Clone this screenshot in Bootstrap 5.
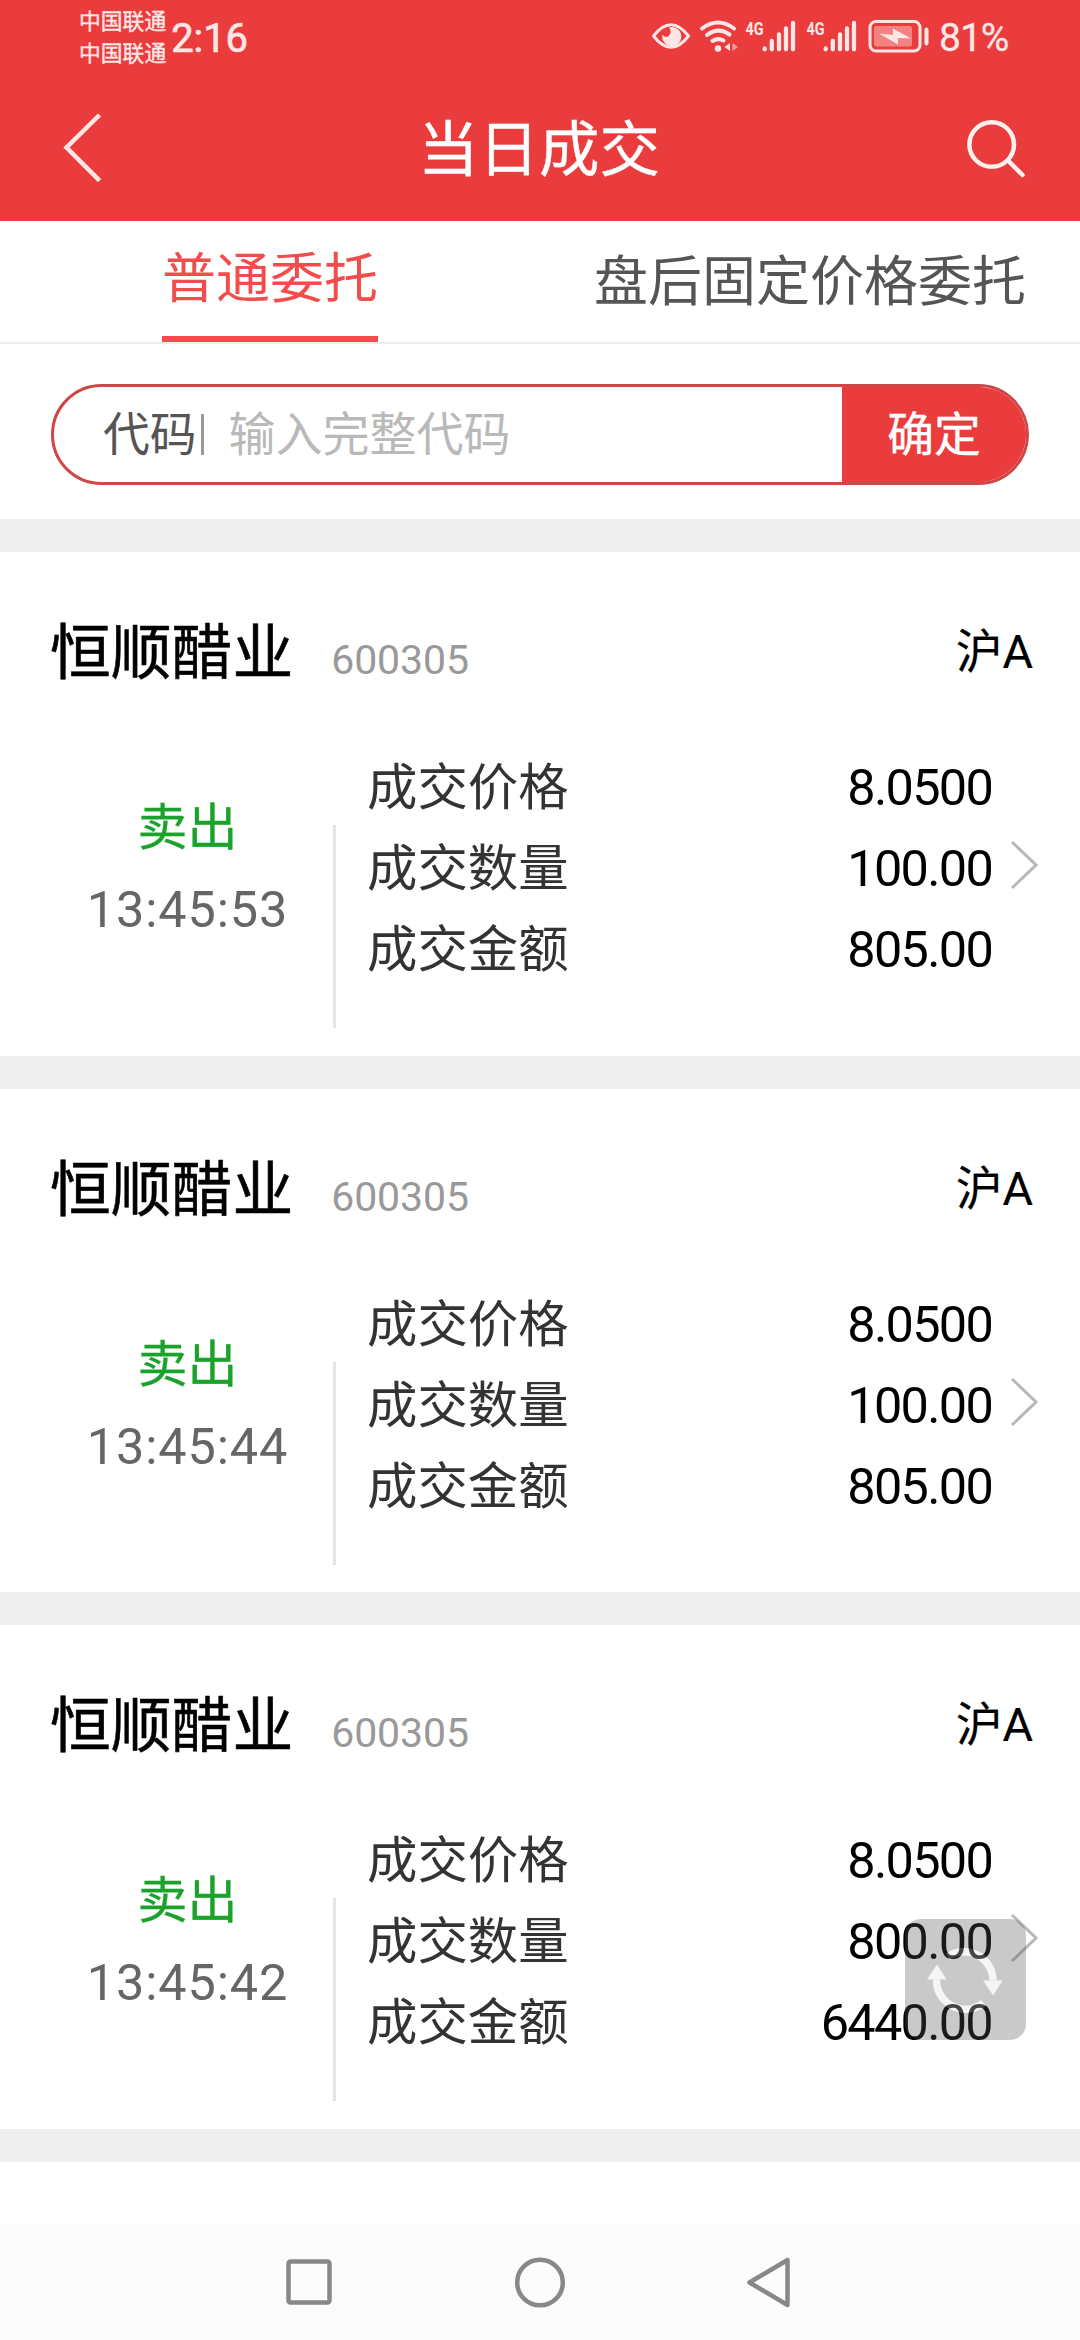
<!DOCTYPE html>
<html lang="zh-CN">
<head>
<meta charset="utf-8">
<meta name="viewport" content="width=device-width, initial-scale=1">
<title>当日成交</title>
<link href="https://cdn.jsdelivr.net/npm/bootstrap@5.3.0/dist/css/bootstrap.min.css" rel="stylesheet">
<style>
  body { font-family: Roboto, "Noto Sans CJK SC", sans-serif; background: #fff; color: #000; width: 1080px; height: 2340px; overflow: hidden; }
  svg { display: block; flex: none; }
  .brand-red { background: #ea3c3c; }
  .status-bar { height: 78px; padding-left: 79px; color: #ffe6e6; }
  .carrier { font-size: 21.8px; line-height: 32px; padding-top: 6px; -webkit-text-stroke: .4px; }
  .clock { font-size: 40px; line-height: 78px; margin-left: 5px; letter-spacing: -.1px; -webkit-text-stroke: .7px; }
  .status-icons { margin-left: auto; }
  .percent { font-size: 39px; line-height: 77px; margin-left: 10px; width: 141px; letter-spacing: -1px; -webkit-text-stroke: .3px; }
  .title-bar { height: 143px; padding: 0 54px 0 62px; color: #fff; }
  .page-title { font-size: 60.5px; line-height: 143px; font-weight: 400; padding: 2px 0 0 10px; -webkit-text-stroke: .4px; }
  .tab-strip { height: 123px; border-bottom: 2px solid #eee; }
  .tab-item, .tab-item:hover { font-size: 54px; color: #555; line-height: 119px; height: 121px; padding: 2px 0 0; border: 0; border-radius: 0; }
  .tab-item.active { color: #f24c4c; border-bottom: 6px solid #f24c4c; padding: 2px 0 0; line-height: 114px; }
  .search-area { height: 175px; padding: 40px 51px 0; }
  .search-pill { height: 101px; border: 3px solid #d04545; border-radius: 51px; overflow: hidden; font-size: 46.8px; }
  .pill-label { color: #555; padding: 2px 0 0 49px; }
  .pill-bar { width: 3px; height: 41px; background: #999; margin-left: 4px; }
  .pill-input, .pill-input:focus { font-size: 47px; padding: 2px 0 0 25px; border: 0; box-shadow: none; background: none; }
  .pill-input::placeholder { color: #b9b9b9; opacity: 1; }
  .pill-btn, .pill-btn:hover { background: #ea3c3c; color: #fff; width: 184px; height: 95px; font-size: 46.8px; line-height: 95px; padding: 1px 0 0; border: 0; border-radius: 0; -webkit-text-stroke: .4px; }
  .gap-band { height: 33px; background: #efefef; }
  .trade { height: 503.5px; }
  .trade-head { height: 192px; padding: 62px 47px 0 50px; }
  .stock-name { font-size: 60.8px; line-height: 80px; -webkit-text-stroke: .6px; }
  .stock-code { font-size: 41px; line-height: 50px; color: #999; margin-left: 38px; letter-spacing: -.1px; }
  .market { font-size: 46.8px; line-height: 77px; -webkit-text-stroke: .2px; }
  .line-col { line-height: 81.2px; font-size: 50.4px; }
  .side-col { width: 333px; padding: 44px 0 0 42px; }
  .side-label { color: #1aa32a; font-size: 50px; -webkit-text-stroke: .3px; }
  .time { color: #666; letter-spacing: .9px; }
  .rule { width: 3px; height: 203px; background: #e5e5e5; margin-top: 81px; }
  .keys { color: #333; padding-left: 31px; padding-top: 3px; }
  .vals { letter-spacing: -1.7px; padding-top: 3px; }
  .chev { margin: 96px 42px 0 18px; }
  .refresh { position: absolute; left: 905px; top: 1919px; width: 121px; height: 121px; border-radius: 16px; background: #545454; opacity: .31; }
  .tail { height: 63px; }
  .nav-keys { height: 116px; background: #fcfcfc; padding: 0 285px; }
</style>
</head>
<body>
<header class="brand-red">
  <div class="status-bar d-flex">
    <div class="carrier"><div>中国联通</div><div>中国联通</div></div>
    <div class="clock">2:16</div>
    <div class="status-icons d-flex">
      <svg width="280" height="78" viewBox="650 0 280 78" fill="none" stroke="#ffe6e6" stroke-width="3">
        <path d="M654.500 36Q672 13.500 689.500 36Q672 58.500 654.500 36Z" stroke-linejoin="round"/>
        <path d="M670 27.500A9.500 9.500 0 1 1 663.500 34.500C664.500 37 667.500 37.500 669.500 36C672 34 672.500 30.500 670 27.500Z" fill="#ffe6e6" stroke="none"/>
        <g stroke-width="4" stroke-linecap="round">
          <path d="M703 28.500Q719 16.500 735 28.500M708 35Q719 26.500 730.500 34.500M713.500 41Q719 37.500 724.500 40.500"/>
        </g>
        <circle cx="719" cy="48.500" r="3.200" fill="#ffe6e6" stroke="none"/>
        <path d="M731 43v8l-5.500-4Z" fill="#ffe6e6" stroke="none"/>
        <path d="M733.500 43v8l5.500-4Z" fill="#f59a9a" stroke="none"/>
        <g fill="#ffe6e6" stroke="none" font-family="Roboto, sans-serif" font-weight="700" font-size="19">
          <text x="746.500" y="34.700" textLength="18" lengthAdjust="spacingAndGlyphs">4G</text>
          <text x="807.500" y="34.700" textLength="18" lengthAdjust="spacingAndGlyphs">4G</text>
        </g>
        <g stroke-width="4.300" stroke-linecap="round">
          <path d="M765.700 48.500v.8M772.800 41v8.300M780 34.500v14.800M787 28.500v20.800M794 23v26.300"/>
          <path d="M826.700 48.500v.8M833.800 41v8.300M841 34.500v14.800M848 28.500v20.800M855 23v26.300"/>
        </g>
        <rect x="871" y="21.500" width="50" height="29.500" rx="6"/>
        <rect x="875" y="26" width="38" height="20.500" rx="2.500" fill="#f38383" stroke="none"/>
        <path d="M880 33.500L894 35V28.500L912 38.500L899 38V44.500Z" fill="#ffe6e6" stroke="none"/>
        <path d="M927.500 29.500v14" stroke-width="4" stroke-linecap="round"/>
      </svg>
      <div class="percent">81%</div>
    </div>
  </div>
  <div class="title-bar d-flex align-items-center justify-content-between">
    <svg width="44" height="72" viewBox="62 114 44 72" fill="none" stroke="#ffe6e6" stroke-width="4.500" stroke-linecap="square"><path d="M98 116.500L66.500 147.500L98 179"/></svg>
    <h1 class="page-title m-0">当日成交</h1>
    <svg width="64" height="72" viewBox="962 113.500 64 72" fill="none" stroke="#fff0f0" stroke-width="4.500" stroke-linecap="round"><circle cx="991.700" cy="144" r="22.300"/><path d="M1008 160L1022.500 174.500"/></svg>
  </div>
</header>

<nav class="tab-strip d-flex">
  <div class="w-50 d-flex justify-content-center"><a class="tab-item nav-link active">普通委托</a></div>
  <div class="w-50 d-flex justify-content-center"><a class="tab-item nav-link">盘后固定价格委托</a></div>
</nav>

<section class="search-area">
  <div class="search-pill d-flex align-items-center">
    <span class="pill-label text-nowrap">代码</span>
    <span class="pill-bar flex-shrink-0"></span>
    <input class="form-control pill-input" type="text" placeholder="输入完整代码">
    <button class="btn pill-btn flex-shrink-0" type="button">确定</button>
  </div>
</section>

<main>
  <div class="gap-band"></div>
  <article class="trade">
    <div class="trade-head d-flex justify-content-between">
      <div class="d-flex align-items-baseline"><span class="stock-name">恒顺醋业</span><span class="stock-code">600305</span></div>
      <span class="market">沪A</span>
    </div>
    <div class="d-flex">
      <div class="side-col line-col text-center"><div class="side-label">卖出</div><div class="time">13:45:53</div></div>
      <div class="rule"></div>
      <div class="keys line-col"><div>成交价格</div><div>成交数量</div><div>成交金额</div></div>
      <div class="vals line-col text-end ms-auto"><div>8.0500</div><div>100.00</div><div>805.00</div></div>
      <svg class="chev" width="28" height="50" viewBox="0 0 28 50" fill="none" stroke="#b8b8b8" stroke-width="3"><path d="M2 2L26 25L2 48"/></svg>
    </div>
  </article>
  <div class="gap-band"></div>
  <article class="trade">
    <div class="trade-head d-flex justify-content-between">
      <div class="d-flex align-items-baseline"><span class="stock-name">恒顺醋业</span><span class="stock-code">600305</span></div>
      <span class="market">沪A</span>
    </div>
    <div class="d-flex">
      <div class="side-col line-col text-center"><div class="side-label">卖出</div><div class="time">13:45:44</div></div>
      <div class="rule"></div>
      <div class="keys line-col"><div>成交价格</div><div>成交数量</div><div>成交金额</div></div>
      <div class="vals line-col text-end ms-auto"><div>8.0500</div><div>100.00</div><div>805.00</div></div>
      <svg class="chev" width="28" height="50" viewBox="0 0 28 50" fill="none" stroke="#b8b8b8" stroke-width="3"><path d="M2 2L26 25L2 48"/></svg>
    </div>
  </article>
  <div class="gap-band"></div>
  <article class="trade">
    <div class="trade-head d-flex justify-content-between">
      <div class="d-flex align-items-baseline"><span class="stock-name">恒顺醋业</span><span class="stock-code">600305</span></div>
      <span class="market">沪A</span>
    </div>
    <div class="d-flex">
      <div class="side-col line-col text-center"><div class="side-label">卖出</div><div class="time">13:45:42</div></div>
      <div class="rule"></div>
      <div class="keys line-col"><div>成交价格</div><div>成交数量</div><div>成交金额</div></div>
      <div class="vals line-col text-end ms-auto"><div>8.0500</div><div>800.00</div><div>6440.00</div></div>
      <svg class="chev" width="28" height="50" viewBox="0 0 28 50" fill="none" stroke="#b8b8b8" stroke-width="3"><path d="M2 2L26 25L2 48"/></svg>
    </div>
  </article>
  <div class="gap-band"></div>
  <div class="tail"></div>
</main>

<!-- floating refresh control -->
<div class="refresh">
  <svg width="121" height="121" viewBox="905 1919 121 121" fill="none" stroke="#e0e0e0" stroke-width="7.500">
    <path d="M948 1956.500A29 29 0 0 1 993 1980.500"/>
    <path d="M983.500 2003A29 29 0 0 1 936.500 1979.500"/>
    <path d="M983 1980.500h19.500L993.200 1995.500ZM927 1979.500h19.500L937 1964.500Z" fill="#e0e0e0" stroke="none"/>
  </svg>
</div>

<footer class="nav-keys d-flex align-items-center justify-content-between">
  <svg width="48" height="52" viewBox="-1 -2 48 52" fill="none" stroke="#888" stroke-width="4.500"><rect x="2.500" y="2.500" width="41" height="41" rx="2"/></svg>
  <svg width="52" height="52" viewBox="0 0.500 52 52" fill="none" stroke="#888" stroke-width="4.500"><circle cx="26" cy="26" r="22.800"/></svg>
  <svg width="48" height="52" viewBox="0 0.500 48 52" fill="none" stroke="#888" stroke-width="4.500" stroke-linejoin="round"><path d="M40.500 3.500V48.500L2.500 26Z"/></svg>
</footer>
<script src="https://cdn.jsdelivr.net/npm/bootstrap@5.3.0/dist/js/bootstrap.bundle.min.js"></script>
</body>
</html>
